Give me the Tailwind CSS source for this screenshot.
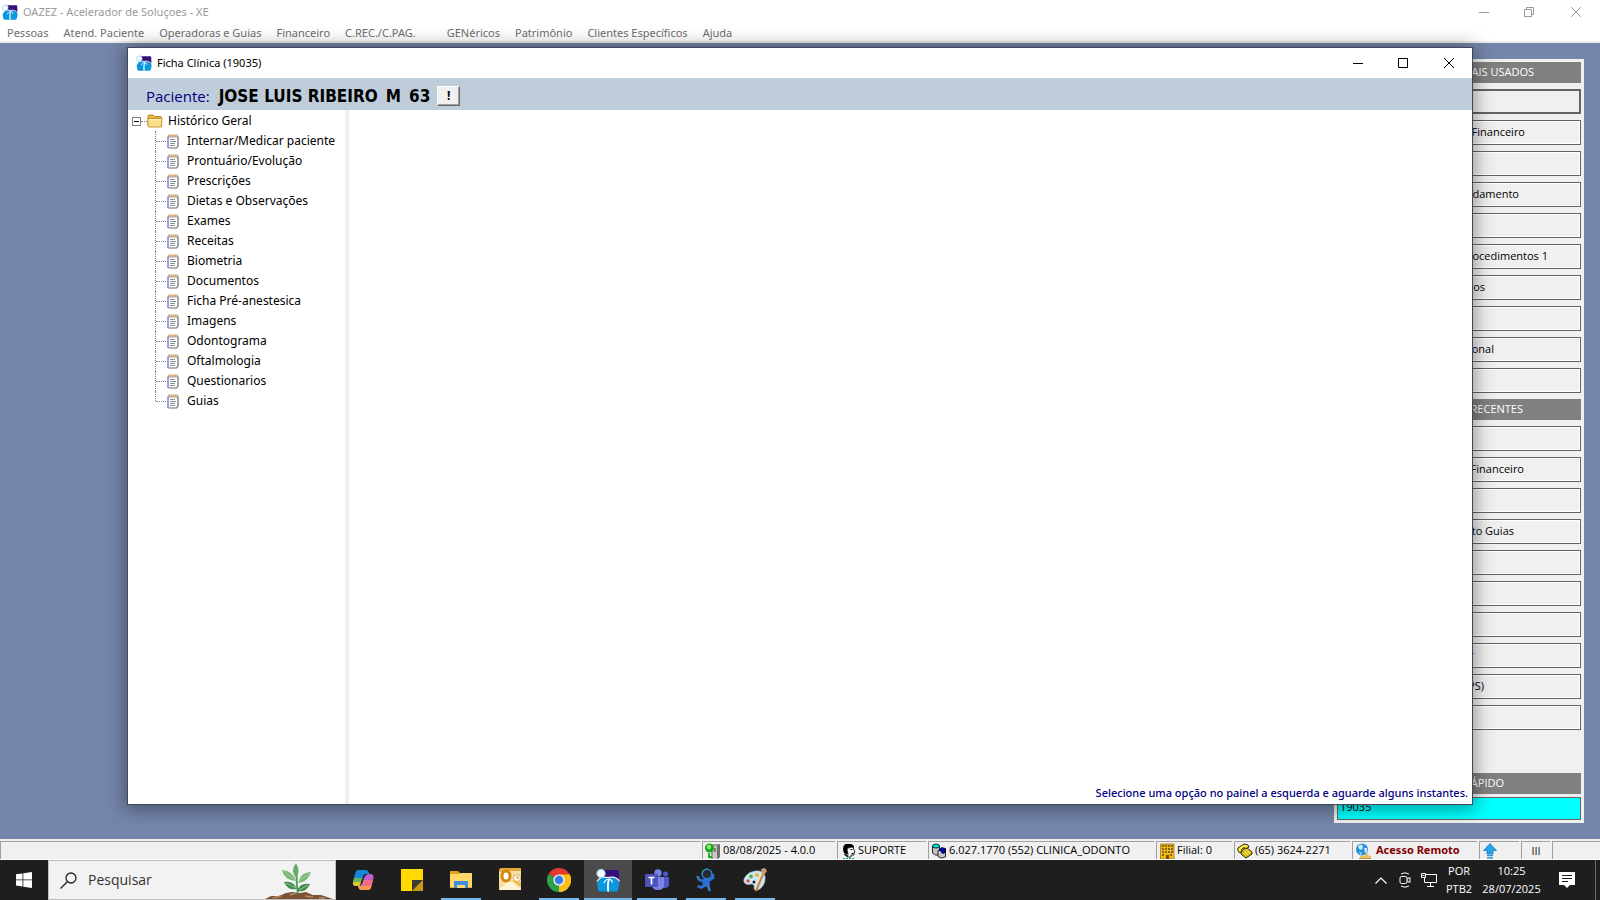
<!DOCTYPE html>
<html lang="pt-BR">
<head>
    <meta charset="UTF-8">
    <meta name="viewport" content="width=device-width, initial-scale=1.0">
    <title>OAZEZ - Acelerador de Soluçoes - XE</title>
    <script src="https://cdn.jsdelivr.net/npm/@tailwindcss/browser@4"></script>
</head>
<body class="h-screen flex flex-col overflow-hidden bg-[#7486ab] font-['Open_Sans',sans-serif] text-[11px] leading-4 text-black">

    <!-- Shared icons -->
    <svg class="hidden">
        <symbol id="app-icon" viewBox="0 0 24 24">
            <path d="M7 2h14q2 0 2 2v10H4V7z" fill="#35107a"/>
            <path d="M1 16C2 11 6 9 12 9S22.500 11 23.500 16l-1.500 6q-.5 1.500-2 1.500H4.500q-2 0-2.500-1.500z" fill="#0b96dd"/>
            <path d="M1 13.500c2-3.700 6-5 11-4 5-1 9.500.5 11.500 4" fill="none" stroke="#fff" stroke-width="1.200"/>
            <path d="M13 11.500c-1.500 3-1.300 7-.8 12" fill="none" stroke="#fff" stroke-width="1.800"/>
            <path d="M8 15q1-3.500 5-4 3 .5 3.500 3.500" fill="none" stroke="#fff" stroke-width="1.200"/>
            <circle cx="5" cy="5.500" r="4.200" fill="#f4fbff" stroke="#8fcdee"/>
        </symbol>
        <symbol id="note-icon" viewBox="0 0 12 15">
            <path d="M1 2h10v10l-1.500 2H1z" fill="#fdfdff"/>
            <path d="M1 2.500V14" stroke="#8080d0" stroke-width="1.500"/>
            <path d="M11 2.500V12l-1.500 2H1.500" fill="none" stroke="#6d6d74" stroke-width="1.200"/>
            <path d="M1.500 1.500h10" stroke="#b9852b" stroke-width="2" stroke-dasharray="1.200 .8"/>
            <path d="M1.500 3h9" stroke="#54462f" stroke-dasharray="1 1"/>
            <path d="M3 5.500h5M3 7.500h6M3 9.500h5M3 11.500h5" stroke="#78877f" stroke-width=".9"/>
        </symbol>
    </svg>

    <!-- Main window title and menu -->
    <header class="shrink-0 h-[43px] bg-white border-b-2 border-[#ececec] flex flex-col font-['Noto_Sans',sans-serif]">
        <div class="flex items-center h-[23px] pl-[2px]">
            <svg class="w-4 h-4"><use href="#app-icon"/></svg>
            <h1 class="ml-[5px] text-[#999]">OAZEZ - Acelerador de Soluçoes - XE</h1>
            <div class="ml-auto flex">
                <button aria-label="Minimizar" class="w-[45px] h-5 grid place-items-center"><svg class="w-[10px] h-[10px]" stroke="#999"><path d="M0 5.500h10"/></svg></button>
                <button aria-label="Restaurar" class="w-[45px] h-5 grid place-items-center"><svg class="w-[10px] h-[10px]" fill="none" stroke="#999"><path d="M.5 2.500h7v7h-7zM2.500 2.500v-2h7v7h-2"/></svg></button>
                <button aria-label="Fechar" class="w-[49px] h-5 grid place-items-center"><svg class="w-[10px] h-[10px]" stroke="#999"><path d="M0 0l10 10M10 0L0 10"/></svg></button>
            </div>
        </div>
        <nav class="flex gap-[15px] pl-[7px] pt-[2px] text-[#6d6d6d] whitespace-nowrap">
            <button>Pessoas</button>
            <button>Atend. Paciente</button>
            <button>Operadoras e Guias</button>
            <button>Financeiro</button>
            <button class="mr-4">C.REC./C.PAG.</button>
            <button>GENéricos</button>
            <button>Patrimônio</button>
            <button>Clientes Específicos</button>
            <button>Ajuda</button>
        </nav>
    </header>

    <main class="relative flex-1 min-h-0 flex justify-end p-4">

        <!-- Shortcuts panel -->
        <aside class="w-[250px] flex flex-col gap-[6px] p-[3px] bg-[#f0f0f0]">
            <h2 class="h-[21px] shrink-0 bg-[#808080] text-white text-right leading-5 pr-[47px]">MAIS USADOS</h2>
            <button class="h-[25px] border-2 border-[#646464]" aria-label="Atalho 1"></button>
            <button class="h-[25px] border border-[#646464] inset-ring inset-ring-white text-right pb-[2px] pr-[55px]">Financeiro</button>
            <button class="h-[25px] border border-[#646464] inset-ring inset-ring-white" aria-label="Atalho 3"></button>
            <button class="h-[25px] border border-[#646464] inset-ring inset-ring-white text-right pb-[2px] pr-[61px]">Andamento</button>
            <button class="h-[25px] border border-[#646464] inset-ring inset-ring-white" aria-label="Atalho 5"></button>
            <button class="h-[25px] border border-[#646464] inset-ring inset-ring-white text-right pb-[2px] pr-[32px]">Procedimentos 1</button>
            <button class="h-[25px] border border-[#646464] inset-ring inset-ring-white text-right pb-[2px] pr-[95px]">tos</button>
            <button class="h-[25px] border border-[#646464] inset-ring inset-ring-white" aria-label="Atalho 8"></button>
            <button class="h-[25px] border border-[#646464] inset-ring inset-ring-white text-right pb-[2px] pr-[86px]">onal</button>
            <button class="h-[25px] border border-[#646464] inset-ring inset-ring-white" aria-label="Atalho 10"></button>

            <h2 class="h-[21px] shrink-0 bg-[#808080] text-white text-right leading-5 pr-[58px]">RECENTES</h2>
            <button class="h-[25px] border border-[#646464] inset-ring inset-ring-white" aria-label="Recente 1"></button>
            <button class="h-[25px] border border-[#646464] inset-ring inset-ring-white text-right pb-[2px] pr-[56px]">Financeiro</button>
            <button class="h-[25px] border border-[#646464] inset-ring inset-ring-white" aria-label="Recente 3"></button>
            <button class="h-[25px] border border-[#646464] inset-ring inset-ring-white text-right pb-[2px] pr-[66px]">to Guias</button>
            <button class="h-[25px] border border-[#646464] inset-ring inset-ring-white" aria-label="Recente 5"></button>
            <button class="h-[25px] border border-[#646464] inset-ring inset-ring-white" aria-label="Recente 6"></button>
            <button class="h-[25px] border border-[#646464] inset-ring inset-ring-white" aria-label="Recente 7"></button>
            <button class="h-[25px] border border-[#646464] inset-ring inset-ring-white text-right pb-[2px] pr-[106px]">r</button>
            <button class="h-[25px] border border-[#646464] inset-ring inset-ring-white text-right pb-[2px] pr-[96px]">PS)</button>
            <button class="h-[25px] border border-[#646464] inset-ring inset-ring-white" aria-label="Recente 10"></button>

            <div class="mt-auto flex flex-col gap-[3px]">
                <h2 class="h-[21px] bg-[#808080] text-white text-right leading-5 pr-[77px]">RÁPIDO</h2>
                <input type="text" value="19035" aria-label="Acesso rápido" class="w-full h-[23px] border border-[#646464] bg-[#00ffff] px-[2px] pb-1">
            </div>
        </aside>

        <!-- Ficha Clínica window -->
        <section class="absolute left-[127px] right-[127px] top-1 bottom-[34px] flex flex-col bg-white border border-[#44475c] shadow-[0_2px_18px_2px_rgba(0,0,0,0.4)] font-['Noto_Sans',sans-serif]">
            <div class="flex items-center h-[30px] pl-2 shrink-0">
                <svg class="w-4 h-4"><use href="#app-icon"/></svg>
                <h2 class="ml-[5px]">Ficha Clínica (19035)</h2>
                <div class="ml-auto flex">
                    <button aria-label="Minimizar" class="w-[45px] h-[29px] grid place-items-center"><svg class="w-[10px] h-[10px]" stroke="#000"><path d="M0 5.500h10"/></svg></button>
                    <button aria-label="Maximizar" class="w-[45px] h-[29px] grid place-items-center"><svg class="w-[10px] h-[10px]" fill="none" stroke="#000"><path d="M.5.5h9v9h-9z"/></svg></button>
                    <button aria-label="Fechar" class="w-[47px] h-[29px] grid place-items-center"><svg class="w-[10px] h-[10px]" stroke="#000"><path d="M0 0l10 10M10 0L0 10"/></svg></button>
                </div>
            </div>

            <div class="flex items-center h-8 shrink-0 pt-[4px] pl-[18px] bg-[#bfccda] leading-5 whitespace-nowrap">
                <span class="font-['Open_Sans',sans-serif] text-[15px] text-[#000080]">Paciente:</span>
                <strong class="ml-[9px] flex gap-2 font-['DejaVu_Sans_Condensed','DejaVu_Sans',sans-serif] text-[17px] font-bold"><span>JOSE LUIS RIBEIRO</span><span>M</span><span>63</span></strong>
                <button class="ml-[7px] w-[23px] h-5 border border-t-white border-l-white border-r-[#696969] border-b-[#696969] bg-[#f0f0f0] shadow-[inset_-1px_-1px_0_#a0a0a0] text-[12px] leading-4 font-bold">!</button>
            </div>

            <div class="flex flex-1 min-h-0">
                <nav class="w-[217px] shrink-0 pt-px text-[12px] leading-5 whitespace-nowrap">
                    <div class="flex items-center h-5 pl-1">
                        <button aria-label="Recolher" class="w-[9px] h-[9px] border border-[#808080] grid place-items-center"><svg class="w-[5px] h-[1px]" stroke="#000"><path d="M0 .5h5"/></svg></button>
                        <span class="w-[6px] border-t border-dotted border-[#808080]"></span>
                        <svg class="w-4 h-4" viewBox="0 0 16 16">
                            <path d="M1 12.500V3q0-1 1-1h4l1.500 1.500h6q1 0 1 1v8.500z" fill="#e9b93f" stroke="#a87516" stroke-width=".8"/>
                            <path d="M1 5.500h14l-.5 8.500H2q-1 0-1-1z" fill="#fbe08a" stroke="#b98320" stroke-width=".8"/>
                            <path d="M2 6.800h12" stroke="#fff6c8"/>
                        </svg>
                        <span class="ml-[5px]">Histórico Geral</span>
                    </div>
                    <!-- Tree branches -->
                    <ul id="tree" class="ml-[27px]"></ul>
                </nav>
                <div class="w-1 shrink-0 bg-[#f0f0f0]"></div>
                <div class="flex-1 flex items-end justify-end pr-1 pb-[3px]">
                    <p class="text-[#000080] font-medium">Selecione uma opção no painel a esquerda e aguarde alguns instantes.</p>
                </div>
            </div>
        </section>
    </main>

    <!-- Status bar -->
    <footer class="shrink-0 h-[21px] flex gap-[2px] pt-[2px] bg-[#f0f0f0] border-b border-white whitespace-nowrap">
        <div class="flex-1 border-t border-l border-[#a0a0a0]"></div>
        <div class="w-[133px] flex items-center gap-[2px] pl-[2px] border-t border-l border-[#a0a0a0]">
            <svg class="w-4 h-4" viewBox="0 0 16 16"><path d="M6 3l2-2h7v13l-2 2H6z" fill="#9a9a9a"/><path d="M8 3h4v13H8z" fill="#c8c8c8"/><path d="M12 3l3-2v13l-3 2z" fill="#6f6f6f"/><path d="M9 6h2M9 8h2" stroke="#333"/><circle cx="4.500" cy="5" r="4.500" fill="#1ea51e"/><circle cx="4" cy="4" r="2.200" fill="#8cf06c"/><path d="M4 10v4h3" fill="none" stroke="#17b217" stroke-width="2"/></svg>
            <span class="pb-px">08/08/2025 - 4.0.0</span>
        </div>
        <div class="w-[89px] flex items-center gap-[2px] pl-1 border-t border-l border-[#a0a0a0]">
            <svg class="w-[14px] h-4" viewBox="0 0 14 16"><path d="M1.500 3l2-2h6l2.500 2v2L8 4 5 6l1 4-1 1.500-3-1.500-1-3z" fill="#000"/><path d="M6 5l5-1 1 3 1 2h-1v3H9v2H5.500l.5-3-1-4z" fill="#fff" stroke="#000" stroke-width=".8"/><path d="M8.500 6.500h2M9.500 10.500h2" stroke="#000"/><path d="M2.500 11l3 2.500" stroke="#000" stroke-width="1.500"/><path d="M1 15.500h12" stroke="#00a8a8" stroke-dasharray="2 1"/></svg>
            <span class="pb-px">SUPORTE</span>
        </div>
        <div class="w-[226px] flex items-center gap-[3px] pl-[3px] border-t border-l border-[#a0a0a0]">
            <svg class="w-[14px] h-4" viewBox="0 0 14 16" stroke="#000" stroke-width=".8"><path d="M.5 3v7l3 2h4V3z" fill="#c4c4c4"/><ellipse cx="4" cy="3" rx="3.500" ry="2" fill="#00e5e5"/><path d="M6 7.500v6l3 1.500 4.500-1V6z" fill="#c8c8c8"/><path d="M7.500 6.500l2-2 4 1v4l-3 1z" fill="#0000c0"/></svg>
            <span class="pb-px">6.027.1770 (552) CLINICA_ODONTO</span>
        </div>
        <div class="w-[76px] flex items-center gap-[2px] pl-[3px] border-t border-l border-[#a0a0a0]">
            <svg class="w-[15px] h-4" viewBox="0 0 15 16"><path d="M.5 1h13.500v15H.5z" fill="#f2b90e" stroke="#9a6a08" stroke-width=".7"/><path d="M2 3h11M2 6h11M2 9h11M2 12h3M10 12h3" stroke="#5b4c30" stroke-width="1.600" stroke-dasharray="2 1"/><path d="M6 12h3v4H6z" fill="#7a4a00"/></svg>
            <span class="pb-px">Filial: 0</span>
        </div>
        <div class="w-[116px] flex items-center gap-[2px] pl-[2px] border-t border-l border-[#a0a0a0]">
            <svg class="w-4 h-4" viewBox="0 0 16 16" stroke="#2c2600"><path d="M4 8.500l5-4.500 6 5v2l-6 4-5-4z" fill="#d9bf16"/><path d="M1 7.500L.8 5 7 1l4 1 1 2-3 1.500L7 4.500 4.500 6.500l.5 2L2 9.500z" fill="#fbef3c"/><path d="M7.500 9l3 2.500M10 7.500l3 2.500" stroke="#fff8a0"/></svg>
            <span class="pb-px">(65) 3624-2271</span>
        </div>
        <div class="w-[125px] flex items-center gap-[5px] pl-[2px] border-t border-l border-[#a0a0a0] font-['Noto_Sans',sans-serif] font-bold text-[#800000]">
            <svg class="w-4 h-4" viewBox="0 0 16 16"><circle cx="7" cy="6.500" r="6" fill="#2f8fd6"/><path d="M3 3q3-3 5 0L7 7 4 6zM9 5l3 0v4l-2 1zM4 9l3 1-1 2z" fill="#c3ecfb"/><path d="M5 13h4l2-2.500h2L14 13h2v2.500H5z" fill="#e9c35a"/><path d="M4 15.500h12" stroke="#b98f42"/></svg>
            <button class="pb-px">Acesso Remoto</button>
        </div>
        <div class="w-[40px] flex items-center pl-[3px] border-t border-l border-[#a0a0a0]">
            <svg class="w-[14px] h-4" viewBox="0 0 14 16"><path d="M7 .5l6.500 7H10V11H4V7.500H.5z" fill="#28a3ea" stroke="#1a6fae" stroke-width=".7"/><path d="M4 12.500h6M4 15h6" stroke="#2c95da" stroke-width="1.500"/></svg>
        </div>
        <div class="w-[29px] grid place-items-center border-t border-l border-[#a0a0a0] text-[#2a0a2a]">III</div>
        <div class="w-[48px] border-t border-l border-[#a0a0a0]"></div>
    </footer>

    <!-- Windows taskbar -->
    <div class="shrink-0 h-10 flex bg-[#1e1e1f] text-white">
        <button aria-label="Iniciar" class="w-12 grid place-items-center"><svg class="w-4 h-4" viewBox="0 0 16 16" fill="#fff"><path d="M0 2.300L6.500 1.400V7.500H0zM7.300 1.300L16 0v7.500H7.300zM0 8.300h6.500v6.200L0 13.600zM7.300 8.300H16V16l-8.700-1.300z"/></svg></button>
        <label class="w-[288px] flex items-center border border-[#bdbdbd] bg-[#f2f2f2] text-[#333] pl-[11px]">
            <svg class="w-[17px] h-[17px] shrink-0" viewBox="0 0 17 17" fill="none" stroke="#222" stroke-width="1.300"><circle cx="11" cy="6" r="5"/><path d="M7.300 9.700L.5 16.500"/></svg>
            <input type="text" placeholder="Pesquisar" class="w-0 flex-1 ml-[11px] text-[14px] leading-5 placeholder:text-[#333] outline-none">
            <svg class="w-[68px] h-[38px] shrink-0 mr-[2px]" viewBox="0 0 68 38">
                <path d="M0 38l6-3 8 0 7-3 6-1 8 1 6-1 7 3 8 0 6 2 6 2z" fill="#7d5337"/>
                <path d="M8 37l8-2M25 34l6-2M40 35l8 1M54 37l6 0" stroke="#b98a62" stroke-width="1.500"/>
                <path d="M33 33q-2-12-1-22" fill="none" stroke="#4f9b56" stroke-width="1.800"/>
                <path d="M31 2q-6 8 0 15 5-7 0-15z" fill="#66ad69"/>
                <path d="M17 9q2 10 14 11-3-10-14-11zM46 11q-10 0-13 11 10-1 13-11z" fill="#78b875"/>
                <path d="M19 21q4 9 13 7-4-9-13-7zM45 23q-10-2-13 7 9 2 13-7z" fill="#3e8d4d"/>
                <path d="M19 10q5 5 11 9M45 12l-11 8M21 22l10 5M43 24l-9 5" stroke="#b9dcae" stroke-width=".7" fill="none"/>
            </svg>
        </label>

        <div class="flex gap-[1px] ml-[3px]">
            <button aria-label="Copilot" class="w-12 grid place-items-center">
                <svg class="w-[22px] h-[22px]" viewBox="0 0 22 22">
                    <path d="M6 1h8q2 0 3 3l1 3h-5l-2 7q-1 3-4 3H4q-4 0-3-4l2-8q1-4 3-4z" fill="#1787d8"/>
                    <path d="M2 9h8l-1 5q-1 3-3 3H4q-4 0-3-4z" fill="#67b94f"/>
                    <path d="M1 13h8.500q-1 4-3.500 4H4q-3.500 0-3-4z" fill="#e6c52b"/>
                    <path d="M16 5h2q4 0 3.500 4l-2 8q-1 4-4 4H9q-2 0-3-4h3l3-8q1-4 4-4z" fill="#c75fc9"/>
                    <path d="M11 11h10l-1.500 6q-1 4-4 4H9q-2 0-3-4h3z" fill="#ee6f83"/>
                    <path d="M6 17h13.500q-1 4-4 4H9q-2 0-3-4z" fill="#f59a50"/>
                    <path d="M13 5h3q-3 1-4 4l-2 6-2 1 3-8q.5-3 2-3z" fill="#1e1e2f"/>
                </svg>
            </button>
            <button aria-label="Notas" class="w-12 grid place-items-center">
                <svg class="w-[22px] h-[22px]" viewBox="0 0 22 22"><path d="M0 0h22v11L11 22H0z" fill="#ffd900"/><path d="M11 11h11L11 22z" fill="#3b3a39"/><path d="M22 11v11H11z" fill="#c99a10"/></svg>
            </button>
            <button aria-label="Explorador de Arquivos" class="w-12 flex flex-col items-center justify-between pt-[9px]">
                <svg class="w-[22px] h-[22px]" viewBox="0 0 22 22"><path d="M0 2h8l2 2h12v15H0z" fill="#e0a21b"/><path d="M0 5h9l2-1h11v15H0z" fill="#ffd869"/><path d="M4 19v-7h14v7h-3v-3H7v3z" fill="#3d8ee0"/><path d="M0 18h4v1H0zM18 18h4v1h-4z" fill="#e8b33c"/></svg>
                <span class="w-10 h-[2px] bg-[#76b9ed]"></span>
            </button>
            <button aria-label="Outlook" class="w-12 flex flex-col items-center pt-2">
                <svg class="w-[22px] h-[22px]" viewBox="0 0 22 22"><path d="M0 2L2 0h20v22H0z" fill="#f5dfa4"/><path d="M2 0h20v3H12L0 4V2z" fill="#e2a83a"/><path d="M0 22l8-8h6l8 8z" fill="#fff4d4"/><path d="M12 12l10 3v4z" fill="#f0b847"/><ellipse cx="7" cy="8" rx="4" ry="5" fill="#fff" stroke="#d48a10" stroke-width="3"/><circle cx="18" cy="10" r="3.500" fill="#fff" stroke="#e7a73b"/><path d="M18 8v2h2" fill="none" stroke="#c87e12"/></svg>
            </button>
            <button aria-label="Chrome" class="w-12 flex flex-col items-center justify-between pt-2">
                <svg class="w-6 h-6" viewBox="0 0 24 24"><path d="M12 12L1.600 6A12 12 0 0 1 22.400 6z" fill="#e33b2e"/><path d="M12 12L22.400 6A12 12 0 0 1 12 24z" fill="#fbc116"/><path d="M12 12v12A12 12 0 0 1 1.600 6z" fill="#2b9f4a"/><path d="M12 6.500h10.700A12 12 0 0 1 12 24l5-9z" fill="#fbc116"/><circle cx="12" cy="12" r="5.600" fill="#fff"/><circle cx="12" cy="12" r="4.400" fill="#3a7bea"/></svg>
                <span class="w-10 h-[2px] bg-[#76b9ed]"></span>
            </button>
            <button aria-label="OAZEZ" class="w-12 flex flex-col items-center justify-between pt-2 bg-[#4b4b4d]">
                <svg class="w-6 h-6"><use href="#app-icon"/></svg>
                <span class="w-12 h-[2px] bg-[#76b9ed]"></span>
            </button>
            <button aria-label="Teams" class="w-12 flex flex-col items-center justify-between pt-2">
                <svg class="w-6 h-6" viewBox="0 0 24 24"><circle cx="20.500" cy="6" r="2.500" fill="#5059c9"/><path d="M16 9h8v7q0 4-4 4h-4z" fill="#5059c9"/><circle cx="13" cy="5" r="3.700" fill="#7b83eb"/><path d="M7 9h12v8q0 5-6 5t-6-5z" fill="#7b83eb"/><rect y="6" width="13" height="13" rx="1" fill="#4b53bc"/><path d="M3.500 9.500h6M6.500 9.500v7" stroke="#fff" stroke-width="1.700"/></svg>
                <span class="w-10 h-[2px] bg-[#76b9ed]"></span>
            </button>
            <button aria-label="Suporte remoto" class="w-12 flex flex-col items-center justify-between pt-2">
                <svg class="w-6 h-6" viewBox="0 0 24 24" fill="none" stroke-linecap="round" stroke-linejoin="round"><path d="M9 12l5 0 1 5-5 1z" fill="#2b6fd8" stroke="#2b6fd8" stroke-width="2"/><path d="M9 13L5.500 12 4 9M15 12.500l4-2.500 0-3M10 18l-3 1.500-2.500-1M14 17l1.500 5" stroke="#2b6fd8" stroke-width="2.600"/><circle cx="13" cy="6" r="4.800" fill="#2a2638" stroke="#2b7fc6" stroke-width="1.500"/><path d="M8 5q1-4 5-4.500M3 8.500l1.500 3.500M14 18l1 4.500" stroke="#35a58f" stroke-width=".8"/></svg>
                <span class="w-10 h-[2px] bg-[#76b9ed]"></span>
            </button>
            <button aria-label="Paint" class="w-12 flex flex-col items-center justify-between pt-2">
                <svg class="w-6 h-6" viewBox="0 0 24 24"><path d="M12 3q8-1 10 5 1 8-5 13-6 3-6-1 1-4-3-4-3 1-5 0-4-2-1-7 3-5 10-6z" fill="#cfe6f4" stroke="#8fb4cc" stroke-width=".6"/><circle cx="5" cy="13" r="1.800" fill="#e0533d"/><circle cx="8" cy="8.500" r="1.900" fill="#55ad55"/><circle cx="14" cy="7" r="2.100" fill="#f0b429"/><circle cx="11" cy="14" r="1.500" fill="#1e1e1f"/><path d="M21 4l-8 19" stroke="#db7e26" stroke-width="2"/><path d="M18 1l4-1 2 3-3 4-2-1z" fill="#c79a72"/></svg>
                <span class="w-10 h-[2px] bg-[#76b9ed]"></span>
            </button>
        </div>

        <div class="ml-auto flex items-center">
            <button aria-label="Mostrar ícones ocultos" class="w-6 grid place-items-center"><svg class="w-3 h-[7px]" viewBox="0 0 12 7" fill="none" stroke="#fff" stroke-width="1.200"><path d="M.5 6.500L6 1l5.500 5.500"/></svg></button>
            <button aria-label="Reunir agora" class="w-6 grid place-items-center"><svg class="w-3 h-4" viewBox="0 0 12 16" fill="none" stroke="#fff"><rect x="1" y="4.500" width="7" height="7" rx="1.500"/><path d="M8 7l3-1.500v5L8 9M2 2q4-2.500 8 0M2 14q4 2.500 8 0"/></svg></button>
            <button aria-label="Rede" class="w-6 grid place-items-center"><svg class="w-4 h-[14px]" viewBox="0 0 16 14" fill="none" stroke="#fff"><path d="M5 1.500h10.500v8H3.500V5M9.500 9.500v4M6 13.500h7M.5.500h4v4h-4zM1.500 2.500h2"/></svg></button>
            <button class="w-9 text-center leading-[18px]">POR<br>PTB2</button>
            <button class="w-[69px] text-center leading-[18px]">10:25<br>28/07/2025</button>
            <button aria-label="Notificações" class="w-[41px] grid place-items-center"><svg class="w-4 h-4" viewBox="0 0 16 16"><path d="M0 0h16v13h-5l-3 3-3-3H0z" fill="#fff"/><path d="M3 3.500h10M3 6.500h10M3 9.500h6" stroke="#1e1e1f"/></svg></button>
            <button aria-label="Mostrar área de trabalho" class="ml-2 w-[5px] h-10 border-l border-[#6b6b6b]"></button>
        </div>
    </div>

    <script>
        const items = [
            'Internar/Medicar paciente', 'Prontuário/Evolução', 'Prescrições', 'Dietas e Observações',
            'Exames', 'Receitas', 'Biometria', 'Documentos', 'Ficha Pré-anestesica', 'Imagens',
            'Odontograma', 'Oftalmologia', 'Questionarios', 'Guias'
        ];

        // The last branch line stops halfway down its row
        document.getElementById('tree').innerHTML = items.map((item, i) => `
            <li class="flex items-center h-5">
                <span class="${i === items.length - 1 ? 'h-[10px] self-start' : 'h-5'} border-l border-dotted border-[#808080]"></span>
                <span class="w-[10px] border-t border-dotted border-[#808080]"></span>
                <svg class="ml-px w-3 h-[15px]"><use href="#note-icon"/></svg>
                <a href="#" class="ml-2">${item}</a>
            </li>
        `).join('');
    </script>
</body>
</html>
